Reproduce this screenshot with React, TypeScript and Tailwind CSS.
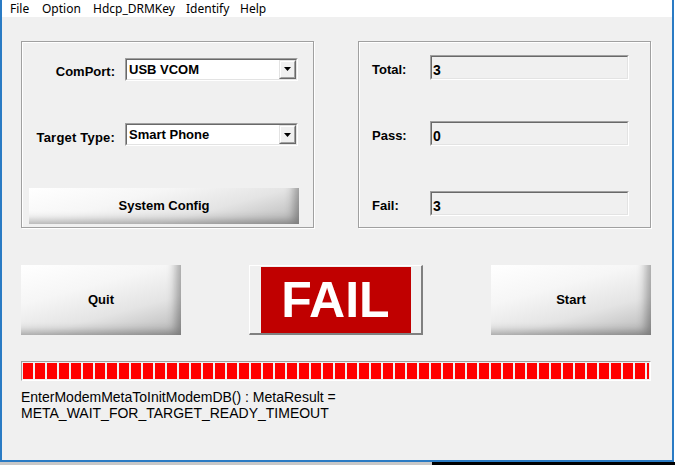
import type { ReactNode } from 'react'

// ── Data ──

const MENU = [
  { label: 'File', w: 'w-[32px]' },
  { label: 'Option', w: 'w-[51px]' },
  { label: 'Hdcp_DRMKey', w: 'w-[93px]' },
  { label: 'Identify', w: 'w-[54px]' },
  { label: 'Help', w: 'w-[40px]' },
]

const COUNTERS = [
  { label: 'Total:', value: '3', mt: 'mt-[13px]' },
  { label: 'Pass:', value: '0', mt: 'mt-[41px]' },
  { label: 'Fail:', value: '3', mt: 'mt-[45px]' },
]

const BLOCKS = Array.from({ length: 53 }, (_, i) => i)

const LABEL = "font-['Liberation_Sans',Arial,sans-serif] text-[13px] font-bold text-black"

// ── Pieces ──

function ComboBox({ value }: { value: string }) {
  return (
    <div className="h-[23px] w-[173px] border border-t-[#a0a0a0] border-l-[#a0a0a0] border-b-white border-r-white">
      <div className="flex h-full items-stretch border border-t-[#696969] border-l-[#696969] border-b-[#e3e3e3] border-r-[#e3e3e3] bg-white">
        <span className={`${LABEL} flex-1 pl-[2px] pt-[1px] text-[13.5px] leading-[17px]`}>{value}</span>
        {/* dropdown arrow button */}
        <div className="w-[17px] border border-t-[#e3e3e3] border-l-[#e3e3e3] border-b-[#696969] border-r-[#696969]">
          <div className="flex h-full items-center justify-center border border-t-white border-l-white border-b-[#a0a0a0] border-r-[#a0a0a0] bg-[#f0f0f0]">
            <svg width="7" height="4" viewBox="0 0 7 4">
              <polygon points="0,0 7,0 3.5,4" fill="#000" />
            </svg>
          </div>
        </div>
      </div>
    </div>
  )
}

function GlossButton({ children, className }: { children: ReactNode; className: string }) {
  return (
    <button
      className={`flex items-center justify-center ${LABEL} bg-[linear-gradient(165deg,#ffffff_0%,#f6f6f6_35%,#e4e4e4_65%,#b5b5b5_100%)] shadow-[inset_-10px_-8px_10px_-5px_rgba(0,0,0,0.32)] ${className}`}
    >
      {children}
    </button>
  )
}

// ── App ──

export default function App() {
  return (
    <div className="flex h-[465px] w-[675px] flex-col overflow-hidden bg-white">
      {/* Application window */}
      <div className="flex h-[462px] w-[674px] flex-col border-x-2 border-b-2 border-[#2a7bc4] bg-[#f0f0f0]">
        {/* Menu bar */}
        <div className="flex h-[17px] items-center bg-white pl-[8px] font-['Noto_Sans',sans-serif] text-[12px] text-black">
          {MENU.map((m) => (
            <span key={m.label} className={`${m.w} leading-[17px]`}>
              {m.label}
            </span>
          ))}
        </div>

        <div className="flex flex-col pl-[19px]">
          {/* Group boxes */}
          <div className="mt-[24px] flex w-[630px] justify-between">
            <div className="flex h-[187px] w-[293px] flex-col border border-[#a0a0a0] shadow-[inset_1px_1px_0_#fff,1px_1px_0_#fff]">
              <div className="mt-[15px] flex items-center">
                <span className={`${LABEL} mt-[5px] w-[93px] text-right`}>ComPort:</span>
                <div className="ml-[10px]">
                  <ComboBox value="USB VCOM" />
                </div>
              </div>
              <div className="mt-[41px] flex items-center">
                <span className={`${LABEL} mt-[5px] w-[93px] text-right text-[13.5px] tracking-[0.2px]`}>Target Type:</span>
                <div className="ml-[10px]">
                  <ComboBox value="Smart Phone" />
                </div>
              </div>
              <GlossButton className="ml-[7px] mt-[41px] h-[36px] w-[270px]">System Config</GlossButton>
            </div>

            <div className="flex h-[187px] w-[293px] flex-col border border-[#a0a0a0] shadow-[inset_1px_1px_0_#fff,1px_1px_0_#fff]">
              {COUNTERS.map((c) => (
                <div key={c.label} className={`${c.mt} flex items-center`}>
                  <span className={`${LABEL} mt-[4px] w-[71px] pl-[13px]`}>{c.label}</span>
                  <div className="h-[25px] w-[199px] border border-t-[#a0a0a0] border-l-[#a0a0a0] border-b-white border-r-white">
                    <div className="h-full border border-t-[#696969] border-l-[#696969] border-b-[#e3e3e3] border-r-[#e3e3e3] bg-[#f0f0f0] pl-[1px]">
                      <span className={`${LABEL} text-[14px] leading-[16px]`}>{c.value}</span>
                    </div>
                  </div>
                </div>
              ))}
            </div>
          </div>

          {/* Action row */}
          <div className="mt-[37px] flex w-[630px] items-stretch justify-between">
            <GlossButton className="h-[70px] w-[160px]">Quit</GlossButton>
            <div className="flex h-[70px] w-[174px] items-center justify-center border-l border-t border-b-2 border-r-2 border-l-white border-t-white border-b-[#808080] border-r-[#808080] bg-[#f0f0f0]">
              <div className="flex h-[66px] w-[150px] items-center justify-center bg-[#c00000] font-['Liberation_Sans',Arial,sans-serif] text-[50px] font-bold leading-none text-white">
                FAIL
              </div>
            </div>
            <GlossButton className="h-[70px] w-[160px]">Start</GlossButton>
          </div>

          {/* Progress bar */}
          <div className="mt-[26px] h-[20px] w-[630px] border border-t-[#a0a0a0] border-l-[#a0a0a0] border-b-white border-r-white bg-[#f0f0f0] p-px">
            <div className="flex h-full gap-[2px] overflow-hidden pr-px">
              {BLOCKS.map((b) => (
                <div key={b} className="h-full w-[10px] shrink-0 bg-[#ff0000]" />
              ))}
            </div>
          </div>

          {/* Status message */}
          <div className="mt-[8px] font-['Liberation_Sans',Arial,sans-serif] text-[14px] leading-[16px] text-black">
            <div>EnterModemMetaToInitModemDB() : MetaResult =</div>
            <div>META_WAIT_FOR_TARGET_READY_TIMEOUT</div>
          </div>
        </div>
      </div>

      {/* Desktop strip below the window */}
      <div className="flex h-[3px] w-[675px]">
        <div className="w-[432px] bg-[#c8c8c8]" />
        <div className="flex-1 bg-black" />
      </div>
    </div>
  )
}
